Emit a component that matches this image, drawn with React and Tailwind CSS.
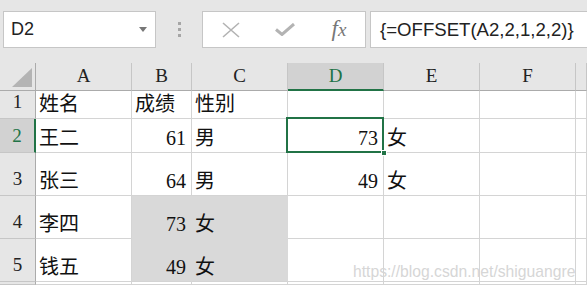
const cols = ["A", "B", "C", "D", "E", "F", ""];

const rows = [
  { n: "1", cells: [{ t: "姓名" }, { t: "成绩" }, { t: "性别" }, {}, {}, {}, {}] },
  { n: "2", cells: [{ t: "王二" }, { t: "61", num: true }, { t: "男" }, { t: "73", num: true }, { t: "女" }, {}, {}] },
  { n: "3", cells: [{ t: "张三" }, { t: "64", num: true }, { t: "男" }, { t: "49", num: true }, { t: "女" }, {}, {}] },
  { n: "4", cells: [{ t: "李四" }, { t: "73", num: true, fill: "br" }, { t: "女", fill: "b" }, {}, {}, {}, {}] },
  { n: "5", cells: [{ t: "钱五" }, { t: "49", num: true, fill: "r" }, { t: "女", fill: "n" }, {}, {}, {}, {}] },
  { n: "", cells: [{}, {}, {}, {}, {}, {}, {}] },
];

const cellFont = { fontFamily: '"Liberation Serif", "Noto Sans CJK SC", serif' };

function Cell({ t, num, fill }) {
  let cls = "border-r border-b border-[#d4d4d4] bg-white";
  if (fill === "br") cls = "border-r border-b border-[#d9d9d9] bg-[#d9d9d9]";
  if (fill === "b") cls = "border-r border-b border-r-[#d9d9d9] border-b-[#d9d9d9] bg-[#d9d9d9]";
  if (fill === "r") cls = "border-r border-b border-r-[#d9d9d9] border-b-[#d4d4d4] bg-[#d9d9d9]";
  if (fill === "n") cls = "border-r border-b border-r-[#d9d9d9] border-b-[#d4d4d4] bg-[#d9d9d9]";
  return (
    <div
      className={`${cls} flex items-end overflow-visible whitespace-nowrap pb-[2px] text-[20px] leading-[24px] text-[#111] ${
        num ? "justify-end pr-[5px]" : "justify-start pl-[3px]"
      }`}
      style={cellFont}
    >
      {t}
    </div>
  );
}

export default function App() {
  return (
    <div className="relative h-[286px] w-[587px] overflow-hidden bg-white">
      {/* formula bar */}
      <div className="flex h-[63px] items-start bg-[#e6e6e6] pl-[3px] pt-[11px]">
        <div className="flex h-[37px] w-[153px] items-center justify-between border border-[#c6c6c6] bg-white pl-[7px] pr-[8px]">
          <span className="text-[18px] text-[#222]" style={{ fontFamily: '"Liberation Sans", sans-serif' }}>
            D2
          </span>
          <svg width="8" height="5" viewBox="0 0 8 5">
            <path d="M0 0h8L4 5z" fill="#777" />
          </svg>
        </div>
        <div className="flex h-[37px] w-[46px] flex-col items-center justify-center gap-[3px]">
          <div className="h-[3px] w-[3px] bg-[#a6a6a6]" />
          <div className="h-[3px] w-[3px] bg-[#a6a6a6]" />
          <div className="h-[3px] w-[3px] bg-[#a6a6a6]" />
        </div>
        <div className="flex h-[37px] w-[164px] items-center border border-[#c6c6c6] bg-white">
          <div className="flex w-[54px] justify-center pl-[2px]">
            <svg width="18" height="16" viewBox="0 0 18 16">
              <path d="M1 1L17 15M17 1L1 15" stroke="#b3b3b3" strokeWidth="1.6" fill="none" />
            </svg>
          </div>
          <div className="flex w-[56px] justify-center">
            <svg width="20" height="13" viewBox="0 0 20 13">
              <path d="M1 6.5L7 11.5L19 1" stroke="#b3b3b3" strokeWidth="3" fill="none" />
            </svg>
          </div>
          <div
            className="flex w-[52px] items-baseline justify-center pb-[2px] italic text-[#777]"
            style={{ fontFamily: '"Liberation Serif", serif' }}
          >
            <span className="text-[23px] leading-none">f</span>
            <span className="text-[19px] leading-none">x</span>
          </div>
        </div>
        <div className="ml-[4px] -mr-[4px] flex h-[37px] flex-1 items-center border border-[#c6c6c6] bg-white pl-[9px]">
          <span className="text-[18.6px] text-[#222]" style={{ fontFamily: '"Liberation Sans", sans-serif' }}>
            {"{=OFFSET(A2,2,1,2,2)}"}
          </span>
        </div>
      </div>

      {/* sheet grid */}
      <div className="grid grid-cols-[36px_96px_60px_96px_96px_96px_96px_1fr] grid-rows-[28px_28px_34px_43px_43px_43px_1fr]">
        <div className="flex items-end justify-end border-r border-b border-[#ababab] bg-[#e6e6e6] pb-[3px] pr-[3px]">
          <svg width="20" height="19" viewBox="0 0 20 19">
            <path d="M20 0V19H0z" fill="#b4b4b4" />
          </svg>
        </div>
        {cols.map((c, i) =>
          c === "D" ? (
            <div
              key={i}
              className="flex items-center justify-center border-r border-b-2 border-r-[#c6c6c6] border-b-[#217346] bg-[#d2d2d2] text-[19px] text-[#217346]"
              style={cellFont}
            >
              {c}
            </div>
          ) : (
            <div
              key={i}
              className="flex items-center justify-center border-r border-b border-r-[#c6c6c6] border-b-[#ababab] bg-[#e6e6e6] text-[19px] text-[#222]"
              style={cellFont}
            >
              {c}
            </div>
          )
        )}
        {rows.map((r) => [
          r.n === "2" ? (
            <div
              key={`h${r.n}`}
              className="flex items-end justify-center border-r-2 border-b border-r-[#217346] border-b-[#c6c6c6] bg-[#d2d2d2] pb-[2px] text-[19px] text-[#217346]"
              style={cellFont}
            >
              {r.n}
            </div>
          ) : (
            <div
              key={`h${r.n}`}
              className="flex items-end justify-center border-r border-b border-r-[#ababab] border-b-[#c6c6c6] bg-[#e6e6e6] pb-[2px] text-[19px] text-[#222]"
              style={cellFont}
            >
              {r.n}
            </div>
          ),
          ...r.cells.map((c, i) => <Cell key={`${r.n}-${i}`} {...c} />),
        ])}
      </div>

      {/* active cell D2 */}
      <div className="pointer-events-none absolute left-[286px] top-[117px] h-[36px] w-[98px] border-2 border-[#217346]" />
      <div className="pointer-events-none absolute left-[381px] top-[150px] h-[6px] w-[6px] border border-white bg-[#217346]" />

      {/* watermark */}
      <div
        className="pointer-events-none absolute left-[353px] top-[260px] whitespace-nowrap text-[15.7px] text-[#d6d6d6]"
        style={{ fontFamily: '"Liberation Sans", sans-serif' }}
      >
        https://blog.csdn.net/shiguangre
      </div>
    </div>
  );
}
